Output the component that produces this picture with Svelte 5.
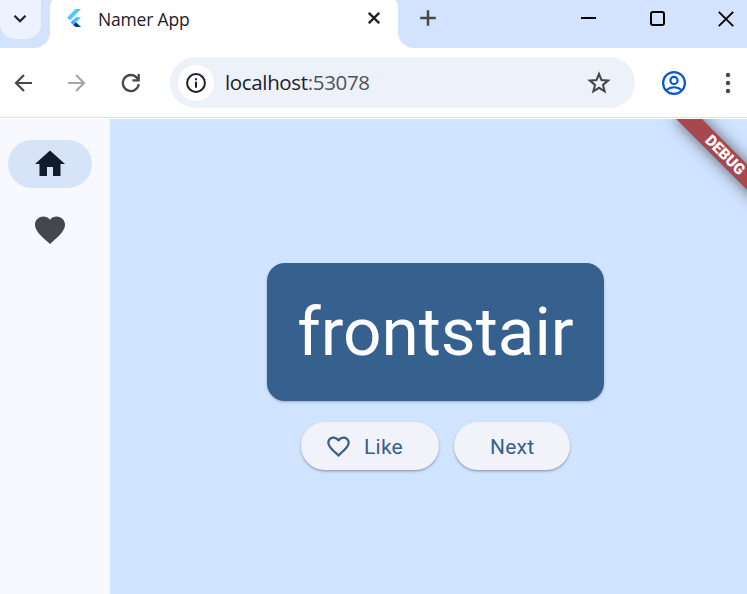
<script>
  let word = $state('frontstair');
  let liked = $state(false);
  const words = ['frontstair', 'newstay', 'lightyear'];
  function next() {
    word = words[(words.indexOf(word) + 1) % words.length];
    liked = false;
  }
</script>

<div class="window">
  <header class="tabs">
    <div class="strip-left">
      <button class="tab-search" aria-label="Search tabs">
        <svg width="14" height="10" viewBox="0 0 14 10"><path d="M1.500 1.800 7 7.200l5.500-5.400" fill="none" stroke="#202124" stroke-width="2.300" /></svg>
      </button>
    </div>
    <div class="tab">
      <svg class="logo" width="14" height="18" viewBox="0 0 14 18">
        <path d="M8.600 0H14L3 11.200.200 8.500z" fill="#54c5f8" />
        <path d="M9 8.200h5l-5 5-2.700-2.500z" fill="#40c4ff" />
        <path d="m6.200 10.800-2.600 2.600L6.300 16 9 13.300z" fill="#29b6f6" />
        <path d="m6.300 16 2.700-2.700 5 4.600H9.200c-1 0-1.800-.800-2.900-1.900z" fill="#01379b" />
      </svg>
      <span class="title">Namer App</span>
      <svg class="close" width="12" height="12" viewBox="0 0 12 12"><path d="m.800.800 10.400 10.400m0-10.400L.800 11.200" stroke="#202124" stroke-width="2.300" /></svg>
    </div>
    <div class="strip-right">
      <svg width="16" height="16" viewBox="0 0 16 16"><path d="M8 .200v15.600M.200 8h15.600" stroke="#474747" stroke-width="2.500" /></svg>
      <svg class="min" width="15" height="16" viewBox="0 0 15 16"><path d="M0 7h15" stroke="#000" stroke-width="2" /></svg>
      <svg class="max" width="15" height="15" viewBox="0 0 15 15"><rect x="1" y="1" width="13" height="13" rx="2" fill="none" stroke="#000" stroke-width="2" /></svg>
      <svg class="quit" width="16" height="16" viewBox="0 0 16 16"><path d="m.800.800 14.400 14.400m0-14.400L.800 15.200" stroke="#000" stroke-width="1.900" /></svg>
    </div>
  </header>

  <nav class="toolbar">
    <svg class="back" width="18" height="18" viewBox="0 0 18 18"><path d="M10 1 2 9l8 8M2 9h16" fill="none" stroke="#474747" stroke-width="2.200" /></svg>
    <svg class="fwd" width="18" height="18" viewBox="0 0 18 18"><path d="m8 1 8 8-8 8m8-8H0" fill="none" stroke="#a8a8a8" stroke-width="2.200" /></svg>
    <svg class="reload" width="20" height="20" viewBox="0 0 20 20"><path d="M17.800 11.200A8 8 0 1 1 15.800 4.600l1.800 2" fill="none" stroke="#474747" stroke-width="2.300" /><path d="M18.800 1v7.400h-7.400V6.200h5.200V1z" fill="#474747" /></svg>
    <div class="omnibox">
      <span class="info">
        <svg width="20" height="20" viewBox="0 0 20 20"><circle cx="10" cy="10" r="8.900" fill="none" stroke="#202124" stroke-width="2" /><path d="M10 8.800v6M10 5.200v2" stroke="#202124" stroke-width="2" /></svg>
      </span>
      <span class="url">localhost<span>:53078</span></span>
      <svg class="star" width="24" height="23" viewBox="0 0 24 23"><path d="m12 3 2.500 6.100 6.600.500-5.100 4.300 1.600 6.400-5.600-3.500-5.600 3.500L8 13.900 2.900 9.600l6.600-.500z" fill="none" stroke="#474747" stroke-width="2.100" /></svg>
    </div>
    <svg class="profile" width="26" height="26" viewBox="0 0 26 26" fill="none" stroke="#0b57d0" stroke-width="2.200"><circle cx="13" cy="13" r="10.900" /><circle cx="13" cy="10.500" r="3.600" /><path d="M5.200 20.300c4.600-4.100 11-4.100 15.600 0" /></svg>
    <svg class="menu" width="6" height="22" viewBox="0 0 6 22" fill="#474747"><circle cx="3" cy="3" r="2.200" /><circle cx="3" cy="11" r="2.200" /><circle cx="3" cy="19" r="2.200" /></svg>
  </nav>

  <div class="app">
    <aside>
      <button class="dest active" aria-label="Home">
        <svg width="36" height="36" viewBox="0 0 24 24"><path d="M10 20v-6h4v6h5v-8h3L12 3 2 12h3v8z" fill="#101c2b" /></svg>
      </button>
      <button class="dest" aria-label="Favorites">
        <svg width="36" height="36" viewBox="0 0 24 24"><path d="m12 21.350-1.450-1.320C5.400 15.360 2 12.280 2 8.500 2 5.420 4.420 3 7.500 3c1.740 0 3.410.810 4.500 2.090C13.090 3.810 14.760 3 16.500 3 19.580 3 22 5.420 22 8.500c0 3.780-3.400 6.860-8.550 11.540z" fill="#43474e" /></svg>
      </button>
    </aside>
    <main>
      <div class="card">{word}</div>
      <div class="actions">
        <button class="like" onclick={() => (liked = !liked)}>
          <svg width="27" height="27" viewBox="0 0 24 24" fill="#36618e">
            {#if liked}
              <path d="m12 21.350-1.450-1.320C5.400 15.360 2 12.280 2 8.500 2 5.420 4.420 3 7.500 3c1.740 0 3.410.810 4.500 2.090C13.090 3.810 14.760 3 16.500 3 19.580 3 22 5.420 22 8.500c0 3.780-3.400 6.860-8.550 11.540z" />
            {:else}
              <path d="M16.500 3c-1.740 0-3.410.810-4.500 2.090C10.910 3.810 9.240 3 7.500 3 4.420 3 2 5.420 2 8.500c0 3.780 3.400 6.860 8.550 11.540L12 21.350l1.450-1.320C18.600 15.360 22 12.280 22 8.500 22 5.420 19.580 3 16.500 3zm-4.400 15.550-.100.100-.100-.100C7.140 14.240 4 11.390 4 8.500 4 6.500 5.500 5 7.500 5c1.540 0 3.040.990 3.570 2.360h1.870C13.460 5.990 14.960 5 16.500 5c2 0 3.500 1.500 3.500 3.500 0 2.890-3.140 5.740-7.900 10.050z" />
            {/if}
          </svg>
          <span>Like</span>
        </button>
        <button class="next" onclick={next}><span>Next</span></button>
      </div>
    </main>
    <div class="debug">DEBUG</div>
  </div>
</div>

<style>
  .window { width: 747px; height: 594px; overflow: hidden; background: #fff; display: flex; flex-direction: column; }
  button { border: 0; padding: 0; margin: 0; font: inherit; background: none; }
  svg { display: block; flex: none; }

  .tabs { display: flex; height: 48px; flex: none; overflow: hidden; background: linear-gradient(#d3e3fd 24px, #fff 24px); }
  .strip-left { width: 50px; background: #d3e3fd; border-bottom-right-radius: 16px; }
  .tab-search { width: 41px; height: 51px; margin-top: -12px; border-radius: 15px; background: #ecf2fe; display: flex; justify-content: center; padding: 26px 1px 0 0; box-sizing: border-box; }
  .tab { width: 348px; height: 60px; margin-top: -7px; background: #fff; border-radius: 15px 15px 0 0; display: flex; align-items: flex-start; box-sizing: border-box; padding: 0 18px 0 17px; }
  .logo { margin-top: 16px; }
  .title { font: 17.500px/24px 'Open Sans', 'Noto Sans', sans-serif; letter-spacing: -0.180px; color: #202124; margin: 14px 0 0 17px; flex: 1; white-space: nowrap; }
  .close { margin-top: 19px; }
  .strip-right { flex: 1; background: #d3e3fd; border-bottom-left-radius: 16px; display: flex; align-items: flex-start; padding: 10px 0 0 22px; }
  .min { margin: 1px 0 0 145px; }
  .max { margin: 1px 0 0 54px; }
  .quit { margin: 1px 0 0 53px; }

  .toolbar { display: flex; align-items: center; height: 69px; flex: none; padding-left: 14px; border-bottom: 1px solid #e1e2e5; margin-bottom: 1px; }
  .fwd { margin-left: 36px; }
  .reload { margin-left: 35px; }
  .omnibox { width: 465px; height: 51px; border-radius: 26px; background: #ecf1fa; margin-left: 29px; display: flex; align-items: center; box-sizing: border-box; padding: 0 24px 0 8px; }
  .info { width: 36px; height: 36px; border-radius: 50%; background: #fff; display: grid; place-items: center; }
  .url { flex: 1; font: 20.500px/30px 'Open Sans', 'Noto Sans', sans-serif; letter-spacing: -0.350px; color: #202124; margin-left: 11px; padding-bottom: 2px; }
  .url span { color: #505357; }
  .profile { margin-left: 26px; }
  .menu { margin-left: 38px; }

  .app { position: relative; width: 761px; flex: 1; display: flex; background: #d1e4ff; font-family: Roboto, sans-serif; overflow: hidden; }
  aside { width: 110px; background: #f8f9ff; display: flex; flex-direction: column; align-items: center; gap: 18px; padding: 21px 10px 0 0; box-sizing: border-box; }
  .dest { width: 84px; height: 48px; border-radius: 24px; display: grid; place-items: center; }
  .dest.active { background: #d7e3f7; }
  aside { padding-left: 0; }
  main { flex: 1; display: flex; flex-direction: column; align-items: center; padding-top: 144px; }
  .card { width: 337px; height: 138px; border-radius: 18px; background: #36618e; color: #fff; font-size: 67.500px; line-height: 138px; text-align: center; box-shadow: 0 1px 2.500px rgba(0, 0, 0, 0.270); }
  .actions { display: flex; gap: 15px; margin-top: 21px; }
  .actions button { height: 48px; border-radius: 24px; background: #f2f3fa; color: #36618e; font-size: 21px; font-weight: 400; letter-spacing: 0.250px; box-shadow: 0 1.500px 2.500px rgba(0, 0, 0, 0.300); display: flex; align-items: center; box-sizing: border-box; }
  .actions span { padding-top: 2px; }
  .actions .like { width: 138px; gap: 12px; padding-left: 24px; }
  .actions .next { width: 116px; padding-left: 36px; }
  .debug { position: absolute; left: 665px; top: 27px; width: 120px; height: 18px; transform: rotate(45deg); background: #a8474f; box-shadow: 0 0 16px rgba(0, 0, 0, 0.600); color: #fff; font-size: 15.300px; font-weight: 900; line-height: 18px; text-align: center; }
</style>
